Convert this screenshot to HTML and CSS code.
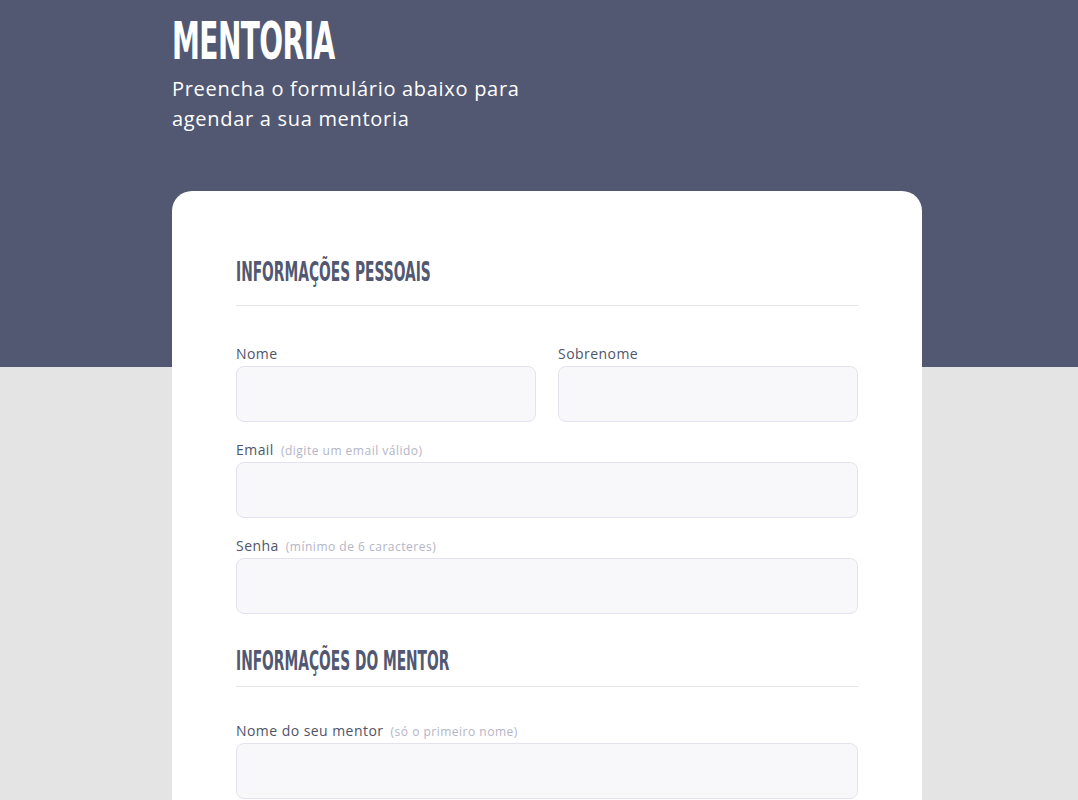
FILE: index.html
```html
<!DOCTYPE html>
<html lang="pt-BR">
<head>
<meta charset="utf-8">
<title>Mentoria</title>
<link rel="stylesheet" href="styles.css">
</head>
<body>
<div class="page">
  <header class="hero">
    <h1 class="title">MENTORIA</h1>
    <p class="subtitle">Preencha o formulário abaixo para<br>agendar a sua mentoria</p>
  </header>
  <form class="card">
    <section class="section section-first">
      <h2 class="section-title">INFORMAÇÕES PESSOAIS</h2>
      <div class="fields">
        <div class="row">
          <div class="field">
            <label class="label">Nome</label>
            <input class="input" type="text">
          </div>
          <div class="field">
            <label class="label">Sobrenome</label>
            <input class="input" type="text">
          </div>
        </div>
        <div class="field">
          <label class="label">Email <span class="hint">(digite um email válido)</span></label>
          <input class="input" type="email">
        </div>
        <div class="field">
          <label class="label">Senha <span class="hint">(mínimo de 6 caracteres)</span></label>
          <input class="input" type="password">
        </div>
      </div>
    </section>
    <section class="section section-second">
      <h2 class="section-title">INFORMAÇÕES DO MENTOR</h2>
      <div class="fields">
        <div class="field">
          <label class="label">Nome do seu mentor <span class="hint">(só o primeiro nome)</span></label>
          <input class="input" type="text">
        </div>
      </div>
    </section>
  </form>
</div>
</body>
</html>
```

FILE: styles.css
```css
* { box-sizing: border-box; }
html, body { margin: 0; padding: 0; }
body {
  background: linear-gradient(#525871 0, #525871 367px, #e4e4e4 367px);
  font-family: "Open Sans", "Noto Sans", sans-serif;
  min-height: 1200px;
}
.page {
  width: 766px;
  margin: 0 auto;
  padding-left: 16px;
}
.hero {
  padding-top: 14px;
  height: 191px;
}
.title {
  margin: 0;
  font-family: "Liberation Sans Narrow", "DejaVu Sans Condensed", sans-serif;
  font-weight: 700;
  font-size: 52px;
  line-height: 54px;
  color: #fff;
  display: inline-block;
  transform: scaleX(0.6);
  transform-origin: left center;
  letter-spacing: -1px;
}
.subtitle {
  margin: 6px 0 0;
  color: #fff;
  font-size: 20px;
  line-height: 30px;
  letter-spacing: 0.7px;
}
.card {
  display: block;
  background: #fff;
  border-radius: 20px;
  padding: 0 64px 64px;
}
.section-first { padding-top: 65px; }
.section-second { padding-top: 31px; }
.section-title {
  margin: 0;
  font-family: "Liberation Sans Narrow", "DejaVu Sans Condensed", sans-serif;
  font-weight: 700;
  font-size: 26px;
  line-height: 32px;
  color: #525871;
  display: inline-block;
  transform: scaleX(0.59);
  transform-origin: left center;
  white-space: nowrap;
}
.section-first .section-title { padding-bottom: 17px; }
.section-second .section-title { padding-bottom: 9px; }
.fields {
  border-top: 1px solid #e4e4ea;
  padding-top: 38px;
  display: flex;
  flex-direction: column;
  gap: 18px;
}
.section-second .fields { padding-top: 34px; }
.row {
  display: flex;
  gap: 22px;
}
.row .field { flex: 1; }
.field {
  display: flex;
  flex-direction: column;
}
.label {
  display: block;
  height: 20px;
  font-size: 14px;
  line-height: 20px;
  color: #4f5468;
  margin-bottom: 2px;
  letter-spacing: 0.45px;
}
.hint {
  font-size: 12px;
  line-height: 1;
  color: #b3b5c6;
  margin-left: 3px;
  letter-spacing: 0.5px;
}
.input {
  height: 56px;
  border: 1px solid #e3e3ef;
  border-radius: 8px;
  background: #f8f8fb;
  font: inherit;
  outline: none;
}
```
